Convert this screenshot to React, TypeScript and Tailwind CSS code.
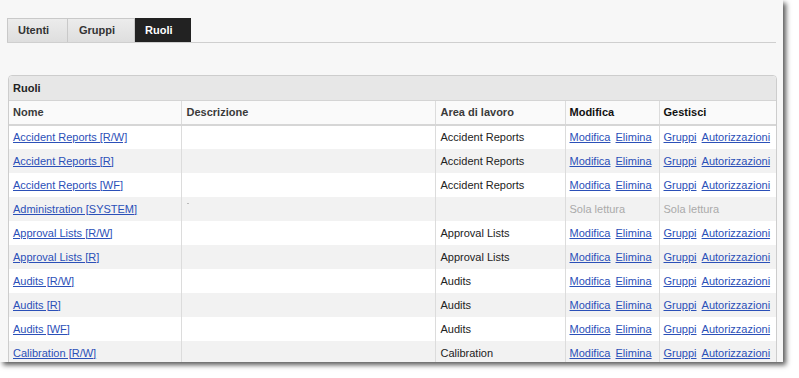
import React from 'react';

type Row = {
  name: string;
  area: string;
  readOnly?: boolean;
};

const rows: Row[] = [
  { name: 'Accident Reports [R/W]', area: 'Accident Reports' },
  { name: 'Accident Reports [R]', area: 'Accident Reports' },
  { name: 'Accident Reports [WF]', area: 'Accident Reports' },
  { name: 'Administration [SYSTEM]', area: '', readOnly: true },
  { name: 'Approval Lists [R/W]', area: 'Approval Lists' },
  { name: 'Approval Lists [R]', area: 'Approval Lists' },
  { name: 'Audits [R/W]', area: 'Audits' },
  { name: 'Audits [R]', area: 'Audits' },
  { name: 'Audits [WF]', area: 'Audits' },
  { name: 'Calibration [R/W]', area: 'Calibration' },
];

const link = 'text-[#2b50b8] underline underline-offset-1';

export default function App() {
  return (
    <div className="w-[799px] h-[378px] bg-white font-['Liberation_Sans',Arial,sans-serif] text-[11px] text-[#333]">
      <div className="w-[783px] h-[362px] bg-[#f7f7f7] overflow-hidden shadow-[3px_3px_5px_rgba(0,0,0,0.65)]">
        {/* tabs */}
        <div className="pt-[18px] pl-[7px] pr-[7px]">
          <div className="flex border-b border-[#cfcfcf]">
            <div className="w-[61px] h-[24px] flex items-center pl-[10px] font-bold bg-gradient-to-b from-[#ececec] to-[#dedede] border border-[#c9c9c9] border-b-0">
              Utenti
            </div>
            <div className="w-[67px] h-[24px] flex items-center pl-[11px] font-bold bg-gradient-to-b from-[#ececec] to-[#dedede] border-t border-r border-[#c9c9c9]">
              Gruppi
            </div>
            <div className="w-[56px] h-[24px] flex items-center pl-[10px] font-bold bg-[#222] text-white">
              Ruoli
            </div>
          </div>
        </div>

        {/* panel */}
        <div className="mt-[32px] ml-[8px] w-[769px] border border-[#cdcdcd] rounded-t-[4px] bg-white">
          <div className="h-[25px] bg-[#e7e7e7] flex items-center pl-[4px] font-bold text-[#222] rounded-t-[4px] border-b border-[#d4d4d4]">
            Ruoli
          </div>
          <table className="w-[767px] table-fixed border-collapse">
            <colgroup>
              <col className="w-[172px]" />
              <col className="w-[254px]" />
              <col className="w-[130px]" />
              <col className="w-[94px]" />
              <col className="w-[117px]" />
            </colgroup>
            <thead>
              <tr className="h-[24px] bg-[#fafafa] border-b-2 border-[#d6d6d6] text-left">
                <th className="pl-[4px] font-bold text-[#3a3a3a] border-r border-[#dcdcdc]">Nome</th>
                <th className="pl-[5px] font-bold text-[#3a3a3a] border-r border-[#dcdcdc]">Descrizione</th>
                <th className="pl-[5px] font-bold text-[#3a3a3a] border-r border-[#dcdcdc]">Area di lavoro</th>
                <th className="pl-[4px] font-bold text-[#111] border-r border-[#dcdcdc]">Modifica</th>
                <th className="pl-[4px] font-bold text-[#111]">Gestisci</th>
              </tr>
            </thead>
            <tbody>
              {rows.map((r, i) => (
                <tr key={r.name} className={i % 2 === 0 ? 'h-[24px] bg-white' : 'h-[24px] bg-[#f2f2f2]'}>
                  <td className="pl-[4px] border-r border-[#dcdcdc] whitespace-nowrap">
                    <a href="#" className={link}>{r.name}</a>
                  </td>
                  <td className="pl-[5px] border-r border-[#dcdcdc] align-top">
                    {r.readOnly && (
                      <div className="pt-[6px]">
                        <div className="w-[2px] h-[1px] bg-[#bbb]" />
                      </div>
                    )}
                  </td>
                  <td className="pl-[5px] border-r border-[#dcdcdc] text-[#222]">{r.area}</td>
                  <td className="pl-[4px] border-r border-[#dcdcdc] whitespace-nowrap">
                    {r.readOnly ? (
                      <span className="text-[#aaa]">Sola lettura</span>
                    ) : (
                      <>
                        <a href="#" className={link}>Modifica</a>{' '}
                        <a href="#" className={`${link} ml-[2px]`}>Elimina</a>
                      </>
                    )}
                  </td>
                  <td className="pl-[4px] whitespace-nowrap">
                    {r.readOnly ? (
                      <span className="text-[#aaa]">Sola lettura</span>
                    ) : (
                      <>
                        <a href="#" className={link}>Gruppi</a>{' '}
                        <a href="#" className={`${link} ml-[2px]`}>Autorizzazioni</a>
                      </>
                    )}
                  </td>
                </tr>
              ))}
            </tbody>
          </table>
        </div>
      </div>
    </div>
  );
}
